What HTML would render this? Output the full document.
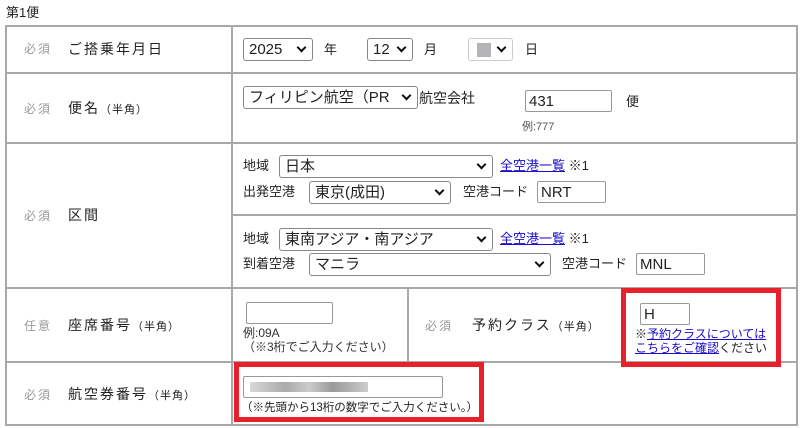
<!DOCTYPE html>
<html><head><meta charset="utf-8"><style>
body{margin:0;width:800px;height:428px;background:#fff;position:relative;overflow:hidden;font-family:"Liberation Sans","Noto Sans CJK JP",sans-serif;color:#222}
.a{position:absolute;white-space:nowrap;line-height:1}
.h{position:absolute;background:#a8a8a8;height:2px}
.v{position:absolute;background:#a8a8a8;width:2px}
.req{color:#999;font-size:12px;letter-spacing:2px}
.lb{font-size:14px;letter-spacing:2px}
.sm{font-size:11px;letter-spacing:0}
.sel{position:absolute;box-sizing:border-box;border:1px solid #888;border-radius:3px;background:#fff;font-size:15px;line-height:22px;padding-left:5px;height:23px}
.sel::after{content:"";position:absolute;right:7px;top:5px;width:5px;height:5px;border-right:2.5px solid #111;border-bottom:2.5px solid #111;transform:rotate(45deg)}
.inp{position:absolute;box-sizing:border-box;border:1px solid #999;border-radius:2px;background:#fff;font-size:15px;line-height:21px;padding-left:3px;height:22px}
.t{font-size:13px}
a{color:#1a0dcc;text-decoration:underline}
.red{position:absolute;border:5px solid #e8202a;box-sizing:border-box}
</style></head><body>
<div class="a" style="left:6px;top:6px;font-size:13px">第1便</div>
<div class="h" style="left:6px;top:25px;width:792px"></div>
<div class="h" style="left:6px;top:72px;width:792px"></div>
<div class="h" style="left:6px;top:142px;width:792px"></div>
<div class="h" style="left:232px;top:214px;width:566px"></div>
<div class="h" style="left:6px;top:287px;width:792px"></div>
<div class="h" style="left:6px;top:361px;width:792px"></div>
<div class="h" style="left:6px;top:424px;width:792px"></div>
<div class="v" style="left:5px;top:25px;height:401px"></div>
<div class="v" style="left:231px;top:25px;height:401px"></div>
<div class="v" style="left:796px;top:25px;height:401px"></div>
<div class="v" style="left:407px;top:287px;height:75px"></div>
<div class="a req" style="left:24px;top:43px">必須</div>
<div class="a lb" style="left:68px;top:42px">ご搭乗年月日</div>
<div class="sel" style="left:243px;top:38px;width:70px">2025</div>
<div class="a t" style="left:324px;top:43px">年</div>
<div class="sel" style="left:367px;top:38px;width:46px">12</div>
<div class="a t" style="left:424px;top:43px">月</div>
<div class="sel" style="left:468px;top:38px;width:45px;border-color:#ccc"><span style="position:absolute;left:8px;top:4px;width:14px;height:14px;background:#b5b5b8"></span></div>
<div class="a t" style="left:525px;top:43px">日</div>
<div class="a req" style="left:24px;top:103px">必須</div>
<div class="a lb" style="left:68px;top:101px">便名<span class="sm" style="letter-spacing:1px">（半角）</span></div>
<div class="sel" style="left:243px;top:86px;width:175px">フィリピン航空（PR</div>
<div class="a t" style="left:419px;top:91px;font-size:14px">航空会社</div>
<div class="inp" style="left:525px;top:90px;width:87px">431</div>
<div class="a t" style="left:626px;top:95px">便</div>
<div class="a sm" style="left:522px;top:122px;color:#555">例:777</div>
<div class="a req" style="left:24px;top:210px">必須</div>
<div class="a lb" style="left:68px;top:208px">区間</div>
<div class="a t" style="left:243px;top:159px">地域</div>
<div class="sel" style="left:279px;top:155px;width:214px">日本</div>
<div class="a t" style="left:500px;top:159px"><a>全空港一覧</a> ※1</div>
<div class="a t" style="left:243px;top:185px">出発空港</div>
<div class="sel" style="left:309px;top:181px;width:142px">東京(成田)</div>
<div class="a t" style="left:463px;top:185px">空港コード</div>
<div class="inp" style="left:537px;top:181px;width:69px">NRT</div>
<div class="a t" style="left:243px;top:232px">地域</div>
<div class="sel" style="left:279px;top:228px;width:214px">東南アジア・南アジア</div>
<div class="a t" style="left:500px;top:232px"><a>全空港一覧</a> ※1</div>
<div class="a t" style="left:243px;top:257px">到着空港</div>
<div class="sel" style="left:309px;top:253px;width:242px">マニラ</div>
<div class="a t" style="left:562px;top:257px">空港コード</div>
<div class="inp" style="left:636px;top:253px;width:69px">MNL</div>
<div class="a req" style="left:24px;top:320px">任意</div>
<div class="a lb" style="left:68px;top:318px">座席番号<span class="sm" style="letter-spacing:1px">（半角）</span></div>
<div class="inp" style="left:246px;top:302px;width:87px"></div>
<div class="a sm" style="left:243px;top:326px;line-height:14px;color:#333;font-size:12px">例:09A<br>（※3桁でご入力ください）</div>
<div class="a req" style="left:425px;top:320px">必須</div>
<div class="a lb" style="left:472px;top:318px">予約クラス<span class="sm" style="letter-spacing:1px">（半角）</span></div>
<div class="inp" style="left:640px;top:303px;width:50px">H</div>
<div class="a sm" style="left:635px;top:327px;line-height:14px;font-size:12px">※<a>予約クラスについては</a><br><a>こちらをご確認</a>ください</div>
<div class="red" style="left:621px;top:288px;width:160px;height:79px"></div>
<div class="a req" style="left:24px;top:389px">必須</div>
<div class="a lb" style="left:68px;top:387px">航空券番号<span class="sm" style="letter-spacing:1px">（半角）</span></div>
<div class="inp" style="left:243px;top:376px;width:200px"><span style="position:absolute;left:6px;top:5px;width:118px;height:10px;background:linear-gradient(90deg,#d8d8d8,#aaa 30%,#ccc 50%,#999 70%,#ccc)"></span></div>
<div class="a sm" style="left:241px;top:403px;font-size:11.5px">（※先頭から13桁の数字でご入力ください。）</div>
<div class="red" style="left:234px;top:362px;width:250px;height:60px"></div>
</body></html>
